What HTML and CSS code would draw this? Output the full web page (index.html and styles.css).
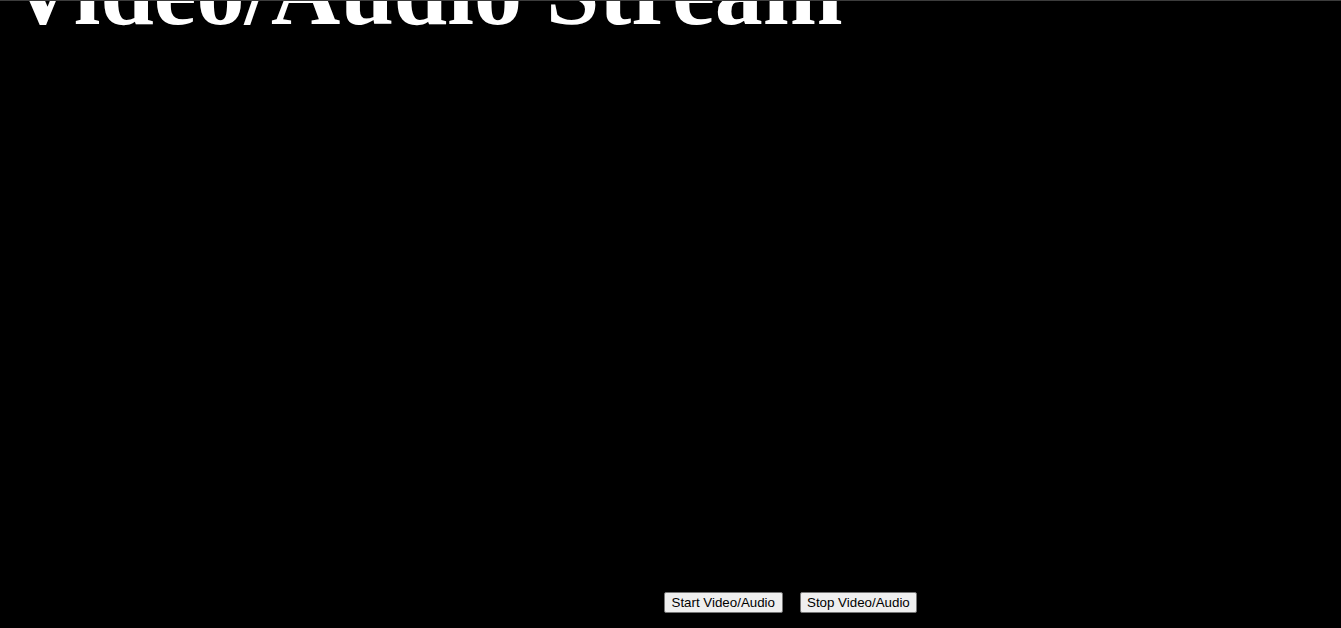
FILE: index.html
```html
<!DOCTYPE html>
<html lang="en">
<head>
<meta charset="utf-8">
<title>Video/Audio Stream</title>
<link rel="stylesheet" href="styles.css">
</head>
<body>
<div class="page">
  <h1 class="title">Video/Audio Stream</h1>
  <div class="stage">
    <div class="video"></div>
    <div class="controls">
      <button class="btn" type="button">Start Video/Audio</button>
      <button class="btn" type="button">Stop Video/Audio</button>
    </div>
  </div>
</div>
</body>
</html>
```

FILE: styles.css
```css
html, body {
  margin: 0;
  padding: 0;
  background: #000;
  height: 100%;
  overflow: hidden;
}

.page {
  border-top: 1px solid #3c3c3c;
  height: 627px;
  overflow: hidden;
  padding-left: 8px;
  color: #fff;
}

.title {
  font-family: "Liberation Serif", "Times New Roman", serif;
  font-weight: 700;
  font-size: 96px;
  line-height: 106px;
  margin: -62px 0 0 0;
  white-space: nowrap;
}

.stage {
  display: flex;
  align-items: flex-end;
  height: 568px;
}

.video {
  width: 656px;
  height: 480px;
  background: #000;
}

.controls {
  display: flex;
  gap: 17px;
}

.btn {
  font-family: "Liberation Sans", Arial, sans-serif;
  font-size: 13.333px;
  color: #000;
  background: #efefef;
  border: 1px solid #767676;
  border-radius: 2px;
  padding: 1px 6.5px;
  height: 21px;
  line-height: 15px;
}
```
